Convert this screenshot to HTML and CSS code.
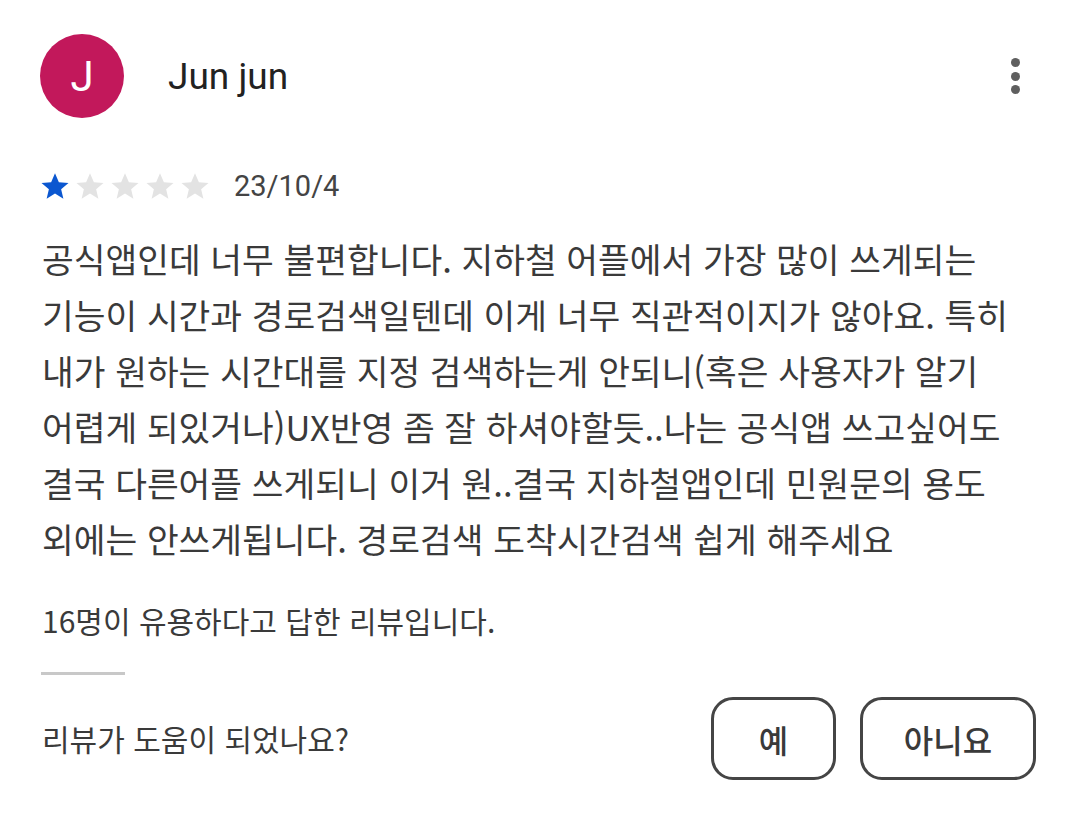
FILE: index.html
```html
<!DOCTYPE html>
<html lang="ko">
<head>
<meta charset="utf-8">
<link rel="stylesheet" href="styles.css">
</head>
<body>
<div class="review">
  <div class="header">
    <div class="avatar">J</div>
    <div class="name">Jun jun</div>
    <div class="more"><span></span><span></span><span></span></div>
  </div>
  <div class="meta">
    <div class="stars">
      <svg viewBox="0 0 24 24" class="star on"><path d="M12 1.8l3.1 7.1 7.7.6-5.9 5 1.8 7.6L12 18l-6.7 4.1 1.8-7.6-5.9-5 7.7-.6z"/></svg>
      <svg viewBox="0 0 24 24" class="star"><path d="M12 1.8l3.1 7.1 7.7.6-5.9 5 1.8 7.6L12 18l-6.7 4.1 1.8-7.6-5.9-5 7.7-.6z"/></svg>
      <svg viewBox="0 0 24 24" class="star"><path d="M12 1.8l3.1 7.1 7.7.6-5.9 5 1.8 7.6L12 18l-6.7 4.1 1.8-7.6-5.9-5 7.7-.6z"/></svg>
      <svg viewBox="0 0 24 24" class="star"><path d="M12 1.8l3.1 7.1 7.7.6-5.9 5 1.8 7.6L12 18l-6.7 4.1 1.8-7.6-5.9-5 7.7-.6z"/></svg>
      <svg viewBox="0 0 24 24" class="star"><path d="M12 1.8l3.1 7.1 7.7.6-5.9 5 1.8 7.6L12 18l-6.7 4.1 1.8-7.6-5.9-5 7.7-.6z"/></svg>
    </div>
    <div class="date">23/10/4</div>
  </div>
  <p class="body">공식앱인데 너무 불편합니다. 지하철 어플에서 가장 많이 쓰게되는<br>기능이 시간과 경로검색일텐데 이게 너무 직관적이지가 않아요. 특히<br>내가 원하는 시간대를 지정 검색하는게 안되니(혹은 사용자가 알기<br>어렵게 되있거나)UX반영 좀 잘 하셔야할듯..나는 공식앱 쓰고싶어도<br>결국 다른어플 쓰게되니 이거 원..결국 지하철앱인데 민원문의 용도<br>외에는 안쓰게됩니다. 경로검색 도착시간검색 쉽게 해주세요</p>
  <div class="helpful">16명이 유용하다고 답한 리뷰입니다.</div>
  <div class="divider"></div>
  <div class="feedback">
    <div class="question">리뷰가 도움이 되었나요?</div>
    <div class="buttons">
      <button class="btn yes">예</button>
      <button class="btn no">아니요</button>
    </div>
  </div>
</div>
</body>
</html>
```
FILE: styles.css
```css
* { box-sizing: border-box; }
html, body { margin: 0; padding: 0; background: #fff; }
body {
  font-family: "Noto Sans CJK KR", "Noto Sans", Roboto, sans-serif;
  color: #3a3a3a;
  width: 1078px;
  height: 826px;
  overflow: hidden;
}
.review { padding: 34px 42px 0 40px; }
.header { display: flex; align-items: center; height: 84px; }
.avatar {
  width: 84px; height: 84px; border-radius: 50%;
  background: #c2185b;
  color: #fff;
  font-family: Roboto, "Noto Sans", sans-serif;
  font-size: 42px;
  display: flex; align-items: center; justify-content: center;
}
.name {
  margin-left: 44px;
  font-family: Roboto, "Noto Sans", sans-serif;
  font-size: 37px;
  color: #222;
  flex: 1;
}
.more { display: flex; flex-direction: column; gap: 4.5px; margin-right: 16px; }
.more span { width: 9px; height: 9px; border-radius: 50%; background: #5f5f5f; }
.meta { display: flex; align-items: center; margin-top: 50px; height: 36px; }
.stars { display: flex; gap: 5px; margin-left: 0; }
.star { width: 30px; height: 30px; fill: #e3e3e3; }
.star.on { fill: #0b57d0; }
.date {
  margin-left: 24px;
  font-family: Roboto, "Noto Sans", sans-serif;
  font-size: 29px;
  color: #444;
}
.body {
  margin: 26px 0 0 2px;
  font-size: 34.5px;
  line-height: 56px;
  color: #3a3a3a;
  white-space: nowrap;
}
.helpful { margin-top: 32px; margin-left: 2px; font-size: 30px; line-height: 44px; color: #3a3a3a; }
.divider { margin-top: 30px; width: 84px; height: 3px; background: #c8c8c8; margin-left: 1px; }
.feedback { display: flex; align-items: center; justify-content: space-between; margin-top: 22px; }
.question { font-size: 30px; color: #3a3a3a; margin-left: 2px; margin-top: -2px; }
.buttons { display: flex; gap: 24px; }
.btn {
  height: 83px;
  border: 3px solid #454545;
  border-radius: 22px;
  background: #fff;
  font-family: "Noto Sans CJK KR", sans-serif;
  font-size: 32px;
  font-weight: 500;
  color: #3a3a3a;
  padding: 0;
}
.btn.yes { width: 125px; }
.btn.no { width: 176px; }
```
